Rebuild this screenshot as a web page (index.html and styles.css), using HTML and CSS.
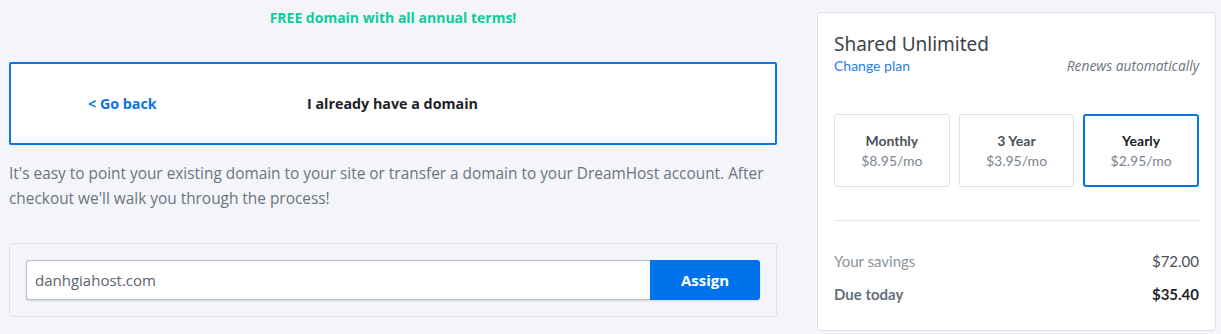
FILE: index.html
```html
<!DOCTYPE html>
<html lang="en">
<head>
<meta charset="utf-8">
<title>Checkout</title>
<link rel="stylesheet" href="styles.css">
</head>
<body>
<main class="page">
  <section class="left">
    <div class="free">FREE domain with all annual terms!</div>
    <div class="choice">
      <a class="back" href="#">&lt; Go back</a>
      <span class="choice-title">I already have a domain</span>
    </div>
    <p class="info">It's easy to point your existing domain to your site or transfer a domain to your DreamHost account. After checkout we'll walk you through the process!</p>
    <div class="assign-box">
      <div class="field">danhgiahost.com</div>
      <button class="assign" type="button">Assign</button>
    </div>
  </section>
  <aside class="card">
    <h2 class="plan-title">Shared Unlimited</h2>
    <div class="plan-meta">
      <a class="change" href="#">Change plan</a>
      <span class="renews">Renews automatically</span>
    </div>
    <div class="terms">
      <div class="term"><div class="term-name">Monthly</div><div class="term-price">$8.95/mo</div></div>
      <div class="term"><div class="term-name">3 Year</div><div class="term-price">$3.95/mo</div></div>
      <div class="term selected"><div class="term-name">Yearly</div><div class="term-price">$2.95/mo</div></div>
    </div>
    <div class="divider"></div>
    <div class="row savings"><span>Your savings</span><span class="val">$72.00</span></div>
    <div class="row due"><span>Due today</span><span class="val">$35.40</span></div>
  </aside>
</main>
</body>
</html>
```
FILE: styles.css
```css
* { box-sizing: border-box; }
html, body { margin: 0; padding: 0; }
body {
  background: #f4f5f9;
  font-family: Lato, "Liberation Sans", sans-serif;
  color: #3d434a;
}
.page {
  display: flex;
  gap: 40px;
  padding-left: 9px;
}
.left {
  width: 768px;
  flex: none;
  font-family: "Open Sans", Lato, sans-serif;
}
.free {
  padding-top: 9px;
  line-height: 17px;
  font-size: 14px;
  font-weight: 700;
  color: #0fcb9d;
  text-align: center;
}
.choice {
  margin-top: 36px;
  height: 83px;
  background: #fff;
  border: 2px solid #0a74ea;
  border-radius: 2px;
  display: flex;
  align-items: center;
  padding-left: 77px;
  font-size: 14.3px;
  font-weight: 700;
}
.back {
  width: 219px;
  color: #0a74ea;
  text-decoration: none;
}
.choice-title { color: #1e2125; }
.info {
  margin: 16px 0 0;
  font-size: 15.4px;
  line-height: 25px;
  color: #6b7480;
}
.assign-box {
  margin-top: 32px;
  border: 1px solid #dfe3e8;
  border-radius: 3px;
  padding: 16px;
  display: flex;
}
.field {
  flex: 1;
  height: 40px;
  background: #fff;
  border: 1px solid #b6c0ca;
  border-right: none;
  border-radius: 3px 0 0 3px;
  box-shadow: 0 1px 2px rgba(60, 80, 100, 0.18);
  padding-left: 8px;
  display: flex;
  align-items: center;
  font-size: 15px;
  color: #5a6470;
}
.assign {
  width: 110px;
  height: 40px;
  border: none;
  border-radius: 0 3px 3px 0;
  background: #0073ec;
  color: #fff;
  font-family: inherit;
  font-size: 15px;
  font-weight: 700;
  box-shadow: 0 1px 2px rgba(60, 80, 100, 0.18);
}
.card {
  margin-top: 12px;
  width: 399px;
  flex: none;
  background: #fff;
  border: 1px solid #dde1e6;
  border-radius: 3px;
  padding: 19px 16px 26px;
  align-self: flex-start;
}
.plan-title {
  margin: 0;
  font-family: "Noto Sans", "Open Sans", sans-serif;
  font-weight: 400;
  font-size: 19px;
  line-height: 24px;
  color: #3d434a;
}
.plan-meta {
  display: flex;
  justify-content: space-between;
  align-items: baseline;
  line-height: 18px;
  margin-top: 1px;
}
.change {
  font-size: 14px;
  color: #1f7ee8;
  text-decoration: none;
}
.renews {
  font-family: "Open Sans", Lato, sans-serif;
  font-size: 13.8px;
  font-style: italic;
  color: #6d7680;
}
.terms {
  margin-top: 39px;
  display: grid;
  grid-template-columns: 1fr 1fr 1fr;
  gap: 9px;
}
.term {
  height: 73px;
  border: 1px solid #dde1e6;
  border-radius: 3px;
  display: flex;
  flex-direction: column;
  justify-content: center;
  align-items: center;
  line-height: 20px;
}
.term.selected { border: 2px solid #0a74ea; }
.term-name {
  font-size: 14px;
  font-weight: 700;
  color: #4a525b;
}
.term.selected .term-name { color: #1d2228; }
.term-price {
  font-size: 14px;
  color: #7b858f;
}
.divider {
  margin-top: 33px;
  height: 1px;
  background: #e2e5e9;
}
.row {
  display: flex;
  justify-content: space-between;
  font-size: 15px;
  line-height: 20px;
}
.savings {
  margin-top: 30px;
  color: #8b949d;
}
.savings .val { color: #4a5058; }
.due {
  margin-top: 13px;
  font-weight: 700;
  color: #66707a;
}
.due .val { color: #1f252b; }
```
